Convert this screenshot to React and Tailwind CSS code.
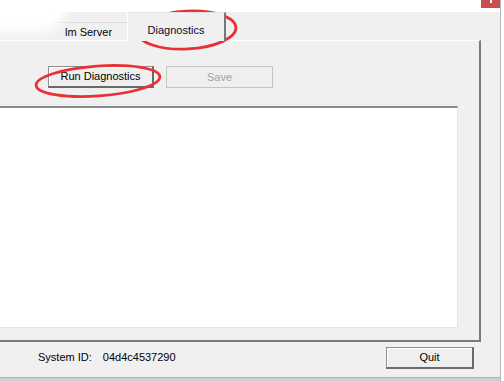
import React from "react";

const font = { fontFamily: '"Liberation Sans", Arial, sans-serif' };

function WinButton({ children, disabled, className = "" }) {
  return (
    <button
      className={`h-[22px] flex items-center justify-center text-[11px] bg-[#efefef] border ${
        disabled
          ? "border-[#c4c4c4] text-[#a3a3a3]"
          : "border-[#8f8f8f] border-r-2 border-b-2 border-r-[#6a6a6a] border-b-[#6a6a6a] text-black shadow-[inset_1px_1px_0_#ffffff]"
      } ${className}`}
    >
      {children}
    </button>
  );
}

export default function App() {
  return (
    <div className="w-[504px] h-[381px] relative overflow-hidden bg-white flex" style={font}>
      <div className="w-[500px] shrink-0 flex flex-col">
        {/* title strip */}
        <div className="h-[12px] shrink-0 bg-white flex justify-end">
          <div className="w-[19px] h-[8px] shrink-0 bg-[#c94f4f] flex justify-center">
            <div className="w-[2px] h-[3px] bg-white" />
          </div>
        </div>

        <div className="flex-1 bg-[#f0f0f0] flex flex-col">
          {/* tabs */}
          <div className="h-[28px] flex items-end">
            <div className="w-[127px] h-[18px] border-t border-t-[#dadada] bg-[#f0f0f0] text-[11px] text-black pl-[65px] pt-[2px] leading-[14px]">
              lm Server
            </div>
            <div className="relative z-10 mb-[-1px] w-[99px] h-[29px] bg-[#f0f0f0] border-l border-t border-l-white border-t-[#e0e0e0] border-r-2 border-r-[#777777] text-[11px] text-[#0a0a2a] flex justify-center pt-[10px] leading-[14px]">
              Diagnostics
            </div>
          </div>

          {/* panel */}
          <div className="h-[302px] w-[481px] border-t border-t-white border-r-2 border-r-[#7a7a7a] border-b-2 border-b-[#7a7a7a] flex flex-col">
            <div className="flex gap-[12px] pl-[48px] pt-[25px]">
              <WinButton className="w-[106px]">Run Diagnostics</WinButton>
              <WinButton disabled className="w-[107px]">Save</WinButton>
            </div>
            <div className="mt-[18px] w-[458px] h-[222px] bg-white border-t-2 border-t-[#8a8a8a] border-r border-r-[#e3e3e3] border-b border-b-[#e3e3e3]" />
          </div>

          {/* bottom row */}
          <div className="h-[35px] flex items-start">
            <div className="text-[11px] text-black pl-[38px] pt-[7px] flex gap-[11px]">
              <span>System ID:</span>
              <span>04d4c4537290</span>
            </div>
            <WinButton className="w-[88px] ml-auto mr-[26px] mt-[5px]">Quit</WinButton>
          </div>
        </div>

        <div className="h-[4px] bg-[#cfcfcf] border-t border-t-[#b0b0b0]" />
      </div>

      {/* background page on the right */}
      <div className="flex-1 bg-white border-l border-l-[#b8b8b8]" />

      {/* blurred patch top-left */}
      <div className="absolute left-[-25px] top-[-12px] w-[90px] h-[44px] rounded-full bg-white blur-[6px]" />

      {/* red annotation ellipses */}
      <svg className="absolute inset-0 pointer-events-none" width="504" height="381">
        <ellipse cx="187" cy="30" rx="49" ry="19" transform="rotate(-3 187 30)" fill="none" stroke="#ea2f36" strokeWidth="2.8" />
        <ellipse cx="98" cy="81" rx="62" ry="15" transform="rotate(-4 98 81)" fill="none" stroke="#ea2f36" strokeWidth="2.8" />
      </svg>
    </div>
  );
}
